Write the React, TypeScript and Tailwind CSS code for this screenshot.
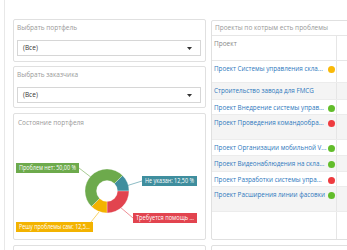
const rows = [
  { name: 'Проект Системы управления скла...', dot: '#f9b908', h: 'h-[22px]', bg: 'bg-white' },
  { name: 'Строительство завода для FMCG', dot: '', h: 'h-[17px]', bg: 'bg-[#f4f4f4]' },
  { name: 'Проект Внедрение системы управ...', dot: '#62bd2b', h: 'h-[15px]', bg: 'bg-white' },
  { name: 'Проект Проведения командообра...', dot: '#ee3b3f', h: 'h-[25px]', bg: 'bg-[#f4f4f4]' },
  { name: 'Проект Организации мобильной V...', dot: '#62bd2b', h: 'h-[16px]', bg: 'bg-white' },
  { name: 'Проект Видеонаблюдения на скла...', dot: '#62bd2b', h: 'h-[16px]', bg: 'bg-[#f4f4f4]' },
  { name: 'Проект Разработки системы упра...', dot: '#ee3b3f', h: 'h-[15px]', bg: 'bg-white' },
  { name: 'Проект Расширения линии фасовки', dot: '#62bd2b', h: 'h-[25px]', bg: 'bg-[#f4f4f4]' },
];

// donut slices, angles clockwise from 12 o'clock
const slices = [
  { from: 45, to: 90, color: '#3f8e9e' },
  { from: 90, to: 180, color: '#e2444f' },
  { from: 180, to: 225, color: '#f3b300' },
  { from: 225, to: 405, color: '#6daa4c' },
];

const cx = 107;
const cy = 191;
const ro = 22;
const ri = 10.5;

const pt = (r: number, a: number) => {
  const rad = (a * Math.PI) / 180;
  return [cx + r * Math.sin(rad), cy - r * Math.cos(rad)];
};

const arc = (from: number, to: number) => {
  const [x1, y1] = pt(ro, from);
  const [x2, y2] = pt(ro, to);
  const [x3, y3] = pt(ri, to);
  const [x4, y4] = pt(ri, from);
  const large = to - from > 180 ? 1 : 0;
  return `M${x1} ${y1} A${ro} ${ro} 0 ${large} 1 ${x2} ${y2} L${x3} ${y3} A${ri} ${ri} 0 ${large} 0 ${x4} ${y4} Z`;
};

const labels = [
  { x: 16, y: 163, w: 63, text: 'Проблем нет: 50,00 %', color: '#6daa4c', line: 'M79 168 L92 178' },
  { x: 142, y: 176, w: 55, text: 'Не указан: 12,50 %', color: '#3f8e9e', line: 'M142 181 L126 186' },
  { x: 133, y: 213, w: 64, text: 'Требуется помощь ...', color: '#e2444f', line: 'M133 218 L120 207' },
  { x: 16, y: 222, w: 77, text: 'Решу проблемы сам: 12,5...', color: '#f3b300', line: 'M91 222 L99 212' },
];

const Select = () => (
  <div className="flex h-[16px] w-[184px] items-center justify-between border border-[#d6d6d6] bg-white px-[5px]">
    <span className="text-[6.5px] leading-[8px] text-[#333]">(Все)</span>
    <svg width="5" height="3" viewBox="0 0 5 3" className="mr-[3px]">
      <path d="M0 0 L5 0 L2.5 3 Z" fill="#333" />
    </svg>
  </div>
);

const FilterPanel = ({ title, h }: { title: string; h: string }) => (
  <div className={`${h} rounded-[2px] border border-[#e0e0e0] px-[3px]`}>
    <div className="h-[20px] pt-[4px] text-[6.5px] leading-[8px] text-[#999]">{title}</div>
    <Select />
  </div>
);

export default function App() {
  return (
    <div className="h-[250px] w-[347px] overflow-hidden bg-white font-['Open_Sans',sans-serif]">
      <div className="ml-[4px] h-full border-l border-[#e8e8e8] pl-[8px] pt-[19px]">
        <div className="flex gap-[5px]">
          <div className="flex w-[193px] shrink-0 flex-col">
            <FilterPanel title="Выбрать портфель" h="h-[43px]" />
            <div className="mt-[4px]">
              <FilterPanel title="Выбрать заказчика" h="h-[42px]" />
            </div>
            <div className="relative mt-[5px] h-[127px] rounded-[2px] border border-[#e0e0e0]">
              <div className="h-[18px] pl-[4px] pt-[5px] text-[6.5px] leading-[8px] text-[#999]">
                Состояние портфеля
              </div>
              <svg width="191" height="107" viewBox="14 132 191 107" className="block">
                {slices.map((s) => (
                  <path key={s.from} d={arc(s.from, s.to)} fill={s.color} stroke="#fff" strokeWidth="0.3" />
                ))}
                {labels.map((l) => (
                  <g key={l.text}>
                    <path d={l.line} stroke={l.color} strokeWidth="0.6" fill="none" />
                    <rect x={l.x} y={l.y} width={l.w} height="10" fill={l.color} />
                    <text
                      x={l.x + 3}
                      y={l.y + 7.3}
                      fontSize="6.4"
                      fill="#fff"
                      fontFamily="Open Sans, sans-serif"
                      textLength={l.w - 6}
                      lengthAdjust="spacingAndGlyphs"
                    >
                      {l.text}
                    </text>
                  </g>
                ))}
              </svg>
            </div>
          </div>

          <div className="mt-[1px] h-[220px] w-[150px] shrink-0 rounded-[2px] border border-[#e0e0e0]">
            <div className="h-[15px] border-b border-[#e6e6e6] pl-[3px] pt-[3px] text-[6.5px] leading-[8px] text-[#999]">
              Проекты по котрым есть проблемы
            </div>
            <div className="flex h-[25px] border-b border-[#e6e6e6]">
              <div className="w-[125px] border-r border-[#e6e6e6] pl-[2px] pt-[4px] text-[6.5px] leading-[8px] text-[#888]">
                Проект
              </div>
            </div>
            {rows.map((r) => (
              <div key={r.name} className={`flex ${r.h} ${r.bg} border-b border-[#ececec]`}>
                <div className="flex h-full w-[125px] items-start justify-between border-r border-[#e6e6e6] pl-[2px] pr-[1px] pt-[3px]">
                  <span className="whitespace-nowrap text-[6.3px] leading-[10px] text-[#2e78bd]">{r.name}</span>
                  {r.dot && (
                    <span className="mt-[1.5px] h-[7px] w-[7px] shrink-0 rounded-full" style={{ backgroundColor: r.dot }} />
                  )}
                </div>
              </div>
            ))}
            <div className="flex h-[27px]">
              <div className="w-[125px] border-r border-[#e6e6e6]" />
            </div>
          </div>
        </div>

        <div className="mt-[5px] flex gap-[5px]">
          <div className="h-[20px] w-[193px] shrink-0 rounded-[2px] border border-[#e0e0e0]" />
          <div className="h-[20px] w-[150px] shrink-0 rounded-[2px] border border-[#e0e0e0]" />
        </div>
      </div>
    </div>
  );
}
